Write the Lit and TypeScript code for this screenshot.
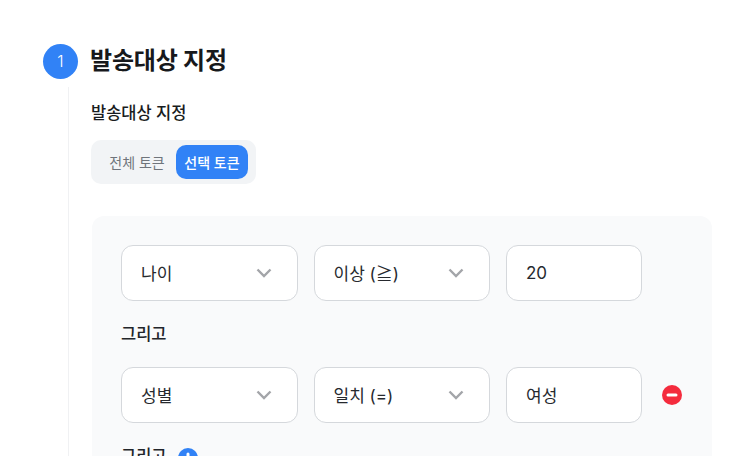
import { LitElement, html, css } from "lit";
import { customElement } from "lit/decorators.js";

const chevron = html`<svg class="chev" width="16" height="10" viewBox="0 0 16 10" fill="none"><path d="M1.5 1.5 8 8l6.500-6.500" stroke="#a3a5a9" stroke-width="2.400"/></svg>`;

@customElement("app-root")
export class AppRoot extends LitElement {
  static styles = css`
    :host {
      display: block;
      width: 756px;
      height: 456px;
      overflow: hidden;
      background: #fff;
      font-family: "Inter", "Noto Sans CJK KR", sans-serif;
      color: #17191c;
    }
    .page { padding: 43px 0 0 43px; }
    .head { display: flex; align-items: center; gap: 12px; height: 36px; }
    .num {
      width: 35px; height: 35px; border-radius: 50%;
      background: #3182f6; color: #fff;
      display: flex; align-items: center; justify-content: center;
      font-size: 16px; font-weight: 300;
    }
    h1 { margin: 0; font-size: 24px; font-weight: 700; line-height: 36px; letter-spacing: -0.200px; }
    .body {
      margin: 8px 0 0 25px;
      border-left: 1px solid #f0f1f3;
      padding-left: 22px;
      height: 400px;
    }
    h2 { margin: 0; padding-top: 14px; font-size: 16.500px; font-weight: 500; line-height: 24px; color: #191c20; }
    .toggle {
      display: inline-flex; align-items: center; gap: 0;
      margin-top: 15px;
      height: 44px; padding: 5px 8px 5px 7px; box-sizing: border-box;
      background: #f2f4f6; border-radius: 10px;
      font-size: 14px;
    }
    .opt { height: 34px; width: 78px; display: flex; align-items: center; justify-content: center; color: #6f747b; }
    .opt.on { width: 72px; background: #3182f6; color: #fff; border-radius: 10px; font-weight: 500; }
    .panel {
      margin: 32px 0 0 1px;
      width: 620px; box-sizing: border-box;
      padding: 29px 29px 40px 29px;
      background: #f9fafb; border-radius: 12px;
      height: 300px;
    }
    .row { display: flex; align-items: center; gap: 16px; height: 55.500px; }
    .field {
      height: 55.500px; box-sizing: border-box;
      background: #fff; border: 1px solid #d5d8dc; border-radius: 12px;
      display: flex; align-items: center; justify-content: space-between;
      padding: 0 25px 0 19px;
      font-size: 17px; color: #26292e;
    }
    .sel { width: 176.500px; }
    .inp { width: 136px; }
    .minus { margin-left: 4px; flex: none; display: block; }
    .and { font-size: 16.500px; font-weight: 500; line-height: 24px; color: #22252a; display: flex; align-items: flex-start; gap: 11px; }
    .and.a { margin: 21px 0 21.500px; }
    .and.b { margin-top: 21.500px; }
    .plus { display: block; flex: none; margin-top: 4px; }
  `;

  render() {
    return html`
      <div class="page">
        <div class="head"><div class="num">1</div><h1>발송대상 지정</h1></div>
        <div class="body">
          <h2>발송대상 지정</h2>
          <div class="toggle">
            <div class="opt">전체 토큰</div>
            <div class="opt on">선택 토큰</div>
          </div>
          <div class="panel">
            <div class="row">
              <div class="field sel"><span>나이</span>${chevron}</div>
              <div class="field sel"><span>이상 (≧)</span>${chevron}</div>
              <div class="field inp">20</div>
            </div>
            <div class="and a">그리고</div>
            <div class="row">
              <div class="field sel"><span>성별</span>${chevron}</div>
              <div class="field sel"><span>일치 (=)</span>${chevron}</div>
              <div class="field inp">여성</div>
              <svg class="minus" width="20" height="20" viewBox="0 0 20 20"><circle cx="10" cy="10" r="10" fill="#f42b3d"/><rect x="4.500" y="8.500" width="11" height="3" rx="1.500" fill="#fff"/></svg>
            </div>
            <div class="and b">그리고
              <svg class="plus" width="20" height="20" viewBox="0 0 20 20"><circle cx="10" cy="10" r="10" fill="#3182f6"/><rect x="4.500" y="8.500" width="11" height="3" rx="1.500" fill="#fff"/><rect x="8.500" y="4.500" width="3" height="11" rx="1.500" fill="#fff"/></svg>
            </div>
          </div>
        </div>
      </div>
    `;
  }
}
